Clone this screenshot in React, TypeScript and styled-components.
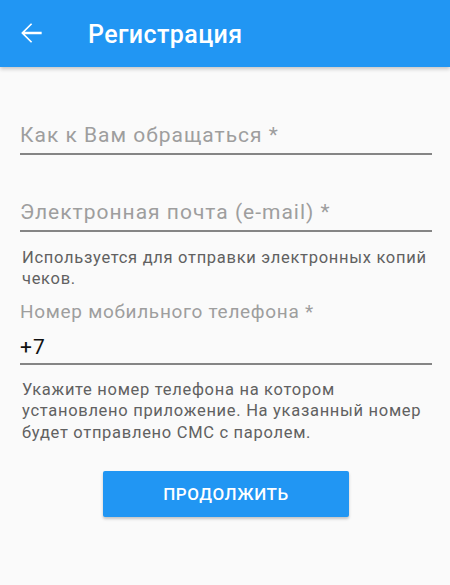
import { FC } from 'react';
import styled, { createGlobalStyle } from 'styled-components';

const GlobalStyle = createGlobalStyle`
  html, body {
    margin: 0;
    padding: 0;
    background: #fafafa;
  }
  * {
    box-sizing: border-box;
  }
`;

const BackArrow: FC = () => (
  <svg width="32" height="32" viewBox="0 0 24 24" fill="#fff">
    <path d="M20 11.1H7.3l5.6-5.6L12 4.6 4.6 12l7.4 7.4.9-.9-5.6-5.6H20z" />
  </svg>
);

const App: FC = () => {
  return (
    <Page>
      <GlobalStyle />
      <AppBar>
        <IconButton aria-label="Назад">
          <BackArrow />
        </IconButton>
        <Title>Регистрация</Title>
      </AppBar>

      <Form>
        <TextInput placeholder="Как к Вам обращаться *" />
        <TextInput placeholder="Электронная почта (e-mail) *" gap={45} />
        <Hint>Используется для отправки электронных копий чеков.</Hint>

        <Label>Номер мобильного телефона *</Label>
        <PhoneInput defaultValue="+7" />
        <Hint $spaced>
          Укажите номер телефона на котором установлено приложение. На
          указанный номер будет отправлено СМС с паролем.
        </Hint>

        <SubmitButton>Продолжить</SubmitButton>
      </Form>
    </Page>
  );
};

const Page = styled.div`
  min-height: 585px;
  background: #fafafa;
  font-family: Roboto, 'Noto Sans', sans-serif;
`;

const AppBar = styled.header`
  height: 67px;
  background: #2196f3;
  display: flex;
  align-items: center;
  padding-left: 15px;
  box-shadow: 0 2px 4px rgba(0, 0, 0, 0.22);
`;

const IconButton = styled.button`
  display: flex;
  align-items: center;
  justify-content: center;
  padding: 0;
  border: none;
  background: none;
  cursor: pointer;
  margin-top: -2px;
`;

const Title = styled.h1`
  margin: 0 0 0 41px;
  padding-top: 2px;
  color: #fff;
  font-size: 25px;
  line-height: 28px;
  font-weight: 500;
  letter-spacing: 0.4px;
`;

const Form = styled.main`
  padding: 56px 18px 0 20px;
  display: flex;
  flex-direction: column;
`;

const TextInput = styled.input<{ gap?: number }>`
  display: block;
  width: 100%;
  margin: ${({ gap }) => gap ?? 0}px 0 0;
  height: 32px;
  padding: 0 0 6px;
  border: none;
  border-bottom: 2px solid #858585;
  background: transparent;
  font-family: inherit;
  font-size: 21px;
  line-height: 24px;
  letter-spacing: 1px;
  color: #212121;
  outline: none;

  &::placeholder {
    color: #9e9e9e;
  }
`;

const PhoneInput = styled(TextInput)`
  margin-top: 12px;
  height: 30px;
  padding-bottom: 4px;
  color: #111;
`;

const Hint = styled.p<{ $spaced?: boolean }>`
  margin: ${({ $spaced }) => ($spaced ? '13.5px' : '16px')} 0 0 2px;
  font-size: 16.5px;
  line-height: ${({ $spaced }) => ($spaced ? '21.7px' : '20.5px')};
  letter-spacing: 0.7px;
  color: #616161;
`;

const Label = styled.label`
  margin-top: 12px;
  font-size: 19px;
  line-height: 22px;
  letter-spacing: 0.7px;
  color: #9e9e9e;
`;

const SubmitButton = styled.button`
  align-self: center;
  margin-top: 27px;
  width: 246px;
  height: 46px;
  border: none;
  border-radius: 2px;
  background: #2196f3;
  color: #fff;
  font-family: inherit;
  font-size: 17px;
  font-weight: 500;
  text-transform: uppercase;
  letter-spacing: 0.6px;
  box-shadow: 0 2px 3px rgba(0, 0, 0, 0.22);
  cursor: pointer;
`;

export default App;
